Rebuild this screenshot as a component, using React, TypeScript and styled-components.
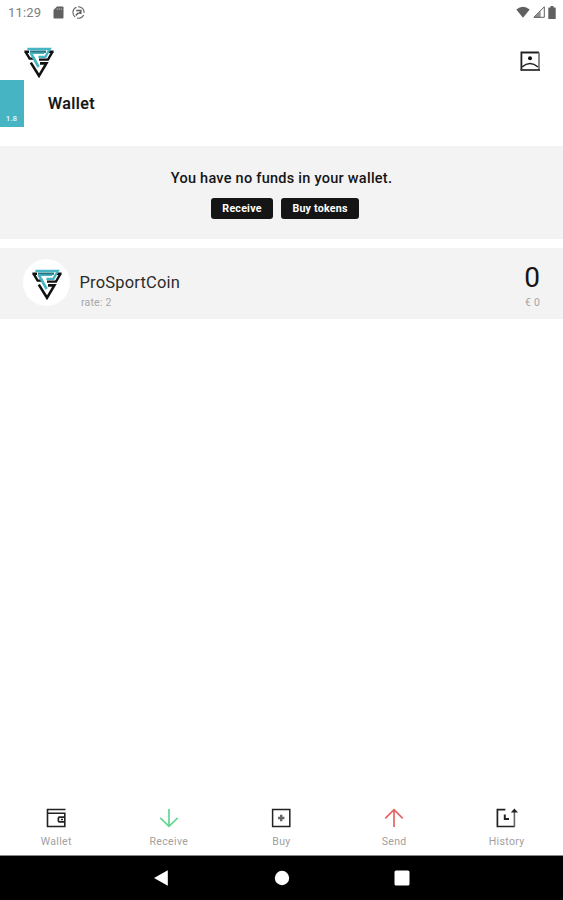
import React, { FC, ReactNode } from 'react';
import styled, { createGlobalStyle } from 'styled-components';

const Theme = {
	blackColor: '#151515',
	tealColor: '#46b4c2',
	panelColor: '#f3f3f3',
	mutedColor: '#a6a6a6',
	statusColor: '#606060',
	greenColor: '#62d890',
	redColor: '#e56464',
};

const GlobalStyle = createGlobalStyle`
	* {
		box-sizing: border-box;
	}
	body {
		margin: 0;
		background: #fff;
		font-family: Roboto, 'Liberation Sans', sans-serif;
	}
	svg {
		display: block;
	}
`;

const Screen = styled.div`
	display: flex;
	flex-direction: column;
	height: 100vh;
	overflow: hidden;
	color: ${Theme.blackColor};
`;

const StatusBar = styled.div`
	display: flex;
	align-items: center;
	justify-content: space-between;
	height: 24px;
	padding: 0 7px 0 8px;
	color: ${Theme.statusColor};
`;

const StatusGroup = styled.div<{ $gap: number }>`
	display: flex;
	align-items: center;
	gap: ${({ $gap }) => $gap}px;
`;

const StatusTime = styled.span`
	width: 34px;
	margin-right: 3px;
	padding-top: 1px;
	font-size: 13px;
	letter-spacing: 0.2px;
	line-height: 25px;
	color: #808080;
	white-space: nowrap;
`;

const Header = styled.header`
	display: flex;
	align-items: flex-start;
	justify-content: space-between;
	height: 56px;
	padding: 23px 23px 0 24px;
`;

const ProfileButton = styled.div`
	padding-top: 4px;
`;

const TitleRow = styled.div`
	display: flex;
	align-items: center;
	height: 47px;
`;

const Version = styled.div`
	display: flex;
	align-items: flex-end;
	justify-content: flex-end;
	width: 24px;
	height: 47px;
	padding: 0 7px 3px 0;
	background: ${Theme.tealColor};
	color: #e4fafc;
	font-size: 8px;
	font-weight: 500;
	line-height: 10px;
`;

const Title = styled.h1`
	margin: 0 0 0 24px;
	font-size: 16px;
	font-weight: 500;
	letter-spacing: 0.4px;
	line-height: 20px;
	-webkit-text-stroke: 0.2px;
`;

const Notice = styled.section`
	display: flex;
	flex-direction: column;
	align-items: center;
	height: 93px;
	margin-top: 19px;
	padding-top: 24px;
	background: ${Theme.panelColor};
`;

const NoticeText = styled.p`
	margin: 0;
	font-size: 14.5px;
	font-weight: 500;
	letter-spacing: 0.26px;
	line-height: 18px;
`;

const NoticeActions = styled.div`
	display: flex;
	gap: 8px;
	margin-top: 10px;
	padding-left: 7px;
`;

const ActionButton = styled.button<{ $width: number }>`
	width: ${({ $width }) => $width}px;
	height: 21px;
	padding: 0;
	border: 0;
	border-radius: 3px;
	background: ${Theme.blackColor};
	color: #fff;
	font-family: inherit;
	font-size: 10.7px;
	font-weight: 700;
	letter-spacing: 0.2px;
	line-height: 21px;
	white-space: nowrap;
`;

const CoinRow = styled.section`
	display: flex;
	height: 71px;
	margin-top: 9px;
	padding: 11px 23px 0;
	background: ${Theme.panelColor};
`;

const CoinBadge = styled.div`
	display: flex;
	align-items: center;
	justify-content: center;
	width: 47px;
	height: 47px;
	padding-top: 4px;
	border-radius: 50%;
	background: #fff;
`;

const CoinInfo = styled.div`
	flex: 1;
	padding: 14px 0 0 9.5px;
`;

const CoinName = styled.div`
	font-size: 16.5px;
	letter-spacing: 0.18px;
	line-height: 20px;
	color: #2c2c2c;
`;

const CoinBalance = styled.div`
	text-align: right;
	padding-top: 4px;
`;

const CoinAmount = styled.div`
	font-size: 28px;
	line-height: 30px;
`;

const Muted = styled.div<{ $indent?: number }>`
	padding: 1px 0 0 ${({ $indent = 0 }) => $indent}px;
	font-size: 10.5px;
	line-height: 18px;
	letter-spacing: 0.2px;
	color: ${Theme.mutedColor};
`;

const TabBar = styled.nav`
	display: grid;
	grid-template-columns: repeat(5, 1fr);
	height: 51px;
	margin-top: auto;
	padding-top: 4px;
`;

const TabItem = styled.div`
	display: flex;
	flex-direction: column;
	align-items: center;
`;

const TabLabel = styled.span`
	margin-top: 7px;
	font-size: 10.5px;
	line-height: 14px;
	letter-spacing: 0.35px;
	color: #a0a0a0;
`;

const SystemBar = styled.div`
	display: flex;
	justify-content: center;
	gap: 104px;
	height: 45px;
	padding-top: 14px;
	border-top: 1px solid #888;
	background: #000;
`;

interface LogoProps {
	width: number;
	height: number;
}

const Logo: FC<LogoProps> = ({ width, height }) => (
	<svg width={width} height={height} viewBox="0 0 30 31" fill="none">
		<path d="M.4 4.8H5M1.6 4.8L5.6 11.6H11" stroke="#111" strokeWidth="2.4" />
		<path d="M25 4.8H29.6M28.4 4.8L24 12.6H15" stroke="#111" strokeWidth="2.4" />
		<path d="M6.8 15.6L15 28.8L22.4 16.4H16" stroke="#111" strokeWidth="2.6" />
		<path d="M6 4.7H22" stroke="#287680" strokeWidth="2.4" />
		<path d="M3.4 2H25.8L21.4 9.8H14.4" stroke="#46b4c2" strokeWidth="2.3" />
		<path d="M7 6.3H20" stroke="#46b4c2" strokeWidth="1.4" />
		<path d="M6.6 5.5L14.6 20" stroke="#46b4c2" strokeWidth="2.6" />
	</svg>
);

const SdCardIcon: FC = () => (
	<svg width="11" height="13" viewBox="0 0 11 13">
		<path d="M4 .5H9.5Q10.5 .5 10.5 1.5V11.5Q10.5 12.5 9.5 12.5H1.5Q.5 12.5 .5 11.5V4Z" fill="currentColor" />
		<path d="M4.3 2.2V4M6.3 2.2V4M8.3 2.2V4" stroke="#bbb" strokeWidth=".8" />
	</svg>
);

const SyncIcon: FC = () => (
	<svg width="13" height="13" viewBox="0 0 13 13" fill="none" stroke="currentColor" strokeWidth="1.1">
		<path d="M3.2 11A5.7 5.7 0 0 1 4.4 1.2M6 .8A5.7 5.7 0 0 1 12.1 7M11.6 9A5.7 5.7 0 0 1 5 12" />
		<path d="M4.2 4.4H8.8V8M3.8 9.4L6.2 7" strokeWidth="1.5" />
		<path d="M5.4 7.8L8.8 4.6V7.8Z" fill="currentColor" stroke="none" />
	</svg>
);

const WifiIcon: FC = () => (
	<svg width="14" height="12" viewBox="0 0 14 12">
		<path d="M7 11.8L.3 3.4Q7-2 13.7 3.4Z" fill="currentColor" />
	</svg>
);

const SignalIcon: FC = () => (
	<svg width="12" height="12" viewBox="0 0 12 12">
		<path d="M.8 11.3L11.3.8V11.3Z" fill="none" stroke="currentColor" strokeWidth="1" />
		<path d="M1 11.5L7.6 5V11.5Z" fill="currentColor" opacity=".7" />
	</svg>
);

const BatteryIcon: FC = () => (
	<svg width="8" height="13" viewBox="0 0 8 13">
		<path d="M2.5 0H5.5V1.4H7.2Q7.7 1.4 7.7 2V12.4Q7.7 13 7.2 13H.8Q.3 13 .3 12.4V2Q.3 1.4 .8 1.4H2.5Z" fill="currentColor" />
	</svg>
);

const ProfileIcon: FC = () => (
	<svg width="20" height="20" viewBox="0 0 20 20" fill="none">
		<path d="M1.4 19V1.5H19" stroke="#222" strokeWidth="1.8" />
		<path d="M19 1.5V19" stroke="#777" strokeWidth="1.7" />
		<path d="M.5 19H20" stroke="#333" strokeWidth="1.8" />
		<path d="M2 16Q10 9 18 16" stroke="#222" strokeWidth="1.6" />
		<circle cx="10" cy="7.2" r="2" fill="#111" />
	</svg>
);

const WalletIcon: FC = () => (
	<svg width="20" height="20" viewBox="0 0 20 20" fill="none" stroke="#222">
		<path d="M19.5 1.5H1.5V18.5H18.8V5.2H1.5" strokeWidth="1.6" />
		<path d="M18.8 9.2H13.4Q12.4 9.2 12.4 10.2V12.8Q12.4 13.8 13.4 13.8H18.8" strokeWidth="1.7" />
		<path d="M15 11.5H17" strokeWidth="1.4" />
	</svg>
);

const BuyIcon: FC = () => (
	<svg width="20" height="20" viewBox="0 0 20 20" fill="none">
		<path d="M1.6 1.5H18.8V18.5H1.6Z" stroke="#222" strokeWidth="1.5" />
		<path d="M10.2 6.8V13.2M7 10H13.4" stroke="#666" strokeWidth="2.4" />
	</svg>
);

const HistoryIcon: FC = () => (
	<svg width="22" height="20" viewBox="0 0 22 20" fill="none">
		<path d="M9.4 1.6H1.4V18.5H18.8" stroke="#222" strokeWidth="1.7" />
		<path d="M18.4 4V18.5" stroke="#666" strokeWidth="1.6" />
		<path d="M8.8 6.6V11H13" stroke="#222" strokeWidth="2" />
		<path d="M14.8 4.6L18.4 .6L22 4.6Z" fill="#222" />
	</svg>
);

const ArrowIcon: FC<{ up?: boolean; color: string }> = ({ up, color }) => (
	<svg width="20" height="20" viewBox="0 0 20 20" fill="none" stroke={color} strokeWidth="1.7">
		{up ? <path d="M10 19V1.5M1.3 10.4L10 1.7L18.7 10.4" /> : <path d="M10 1V18.5M1.3 9.9L10 18.4L18.7 9.9" />}
	</svg>
);

interface Tab {
	label: string;
	icon: ReactNode;
}

const tabs: Tab[] = [
	{ label: 'Wallet', icon: <WalletIcon /> },
	{ label: 'Receive', icon: <ArrowIcon color={Theme.greenColor} /> },
	{ label: 'Buy', icon: <BuyIcon /> },
	{ label: 'Send', icon: <ArrowIcon up color={Theme.redColor} /> },
	{ label: 'History', icon: <HistoryIcon /> },
];

const App: FC = () => {
	return (
		<>
			<GlobalStyle />
			<Screen>
				<StatusBar>
					<StatusGroup $gap={8}>
						<StatusTime>11:29</StatusTime>
						<SdCardIcon />
						<SyncIcon />
					</StatusGroup>
					<StatusGroup $gap={3}>
						<WifiIcon />
						<SignalIcon />
						<BatteryIcon />
					</StatusGroup>
				</StatusBar>
				<Header>
					<Logo width={30} height={31} />
					<ProfileButton>
						<ProfileIcon />
					</ProfileButton>
				</Header>
				<TitleRow>
					<Version>1.8</Version>
					<Title>Wallet</Title>
				</TitleRow>
				<Notice>
					<NoticeText>You have no funds in your wallet.</NoticeText>
					<NoticeActions>
						<ActionButton $width={62}>Receive</ActionButton>
						<ActionButton $width={78}>Buy tokens</ActionButton>
					</NoticeActions>
				</Notice>
				<CoinRow>
					<CoinBadge>
						<Logo width={30} height={31} />
					</CoinBadge>
					<CoinInfo>
						<CoinName>ProSportCoin</CoinName>
						<Muted $indent={1.5}>rate: 2</Muted>
					</CoinInfo>
					<CoinBalance>
						<CoinAmount>0</CoinAmount>
						<Muted>€ 0</Muted>
					</CoinBalance>
				</CoinRow>
				<TabBar>
					{tabs.map(({ label, icon }) => (
						<TabItem key={label}>
							{icon}
							<TabLabel>{label}</TabLabel>
						</TabItem>
					))}
				</TabBar>
				<SystemBar>
					<svg width="16" height="16" viewBox="0 0 16 16">
						<path d="M0 8L13.8 .2V15.8Z" fill="#fff" />
					</svg>
					<svg width="16" height="16" viewBox="0 0 16 16">
						<circle cx="8" cy="8" r="7.2" fill="#fff" />
					</svg>
					<svg width="16" height="16" viewBox="0 0 16 16">
						<rect x=".5" y=".5" width="15" height="15" rx="1.6" fill="#fff" />
					</svg>
				</SystemBar>
			</Screen>
		</>
	);
};

export default App;
